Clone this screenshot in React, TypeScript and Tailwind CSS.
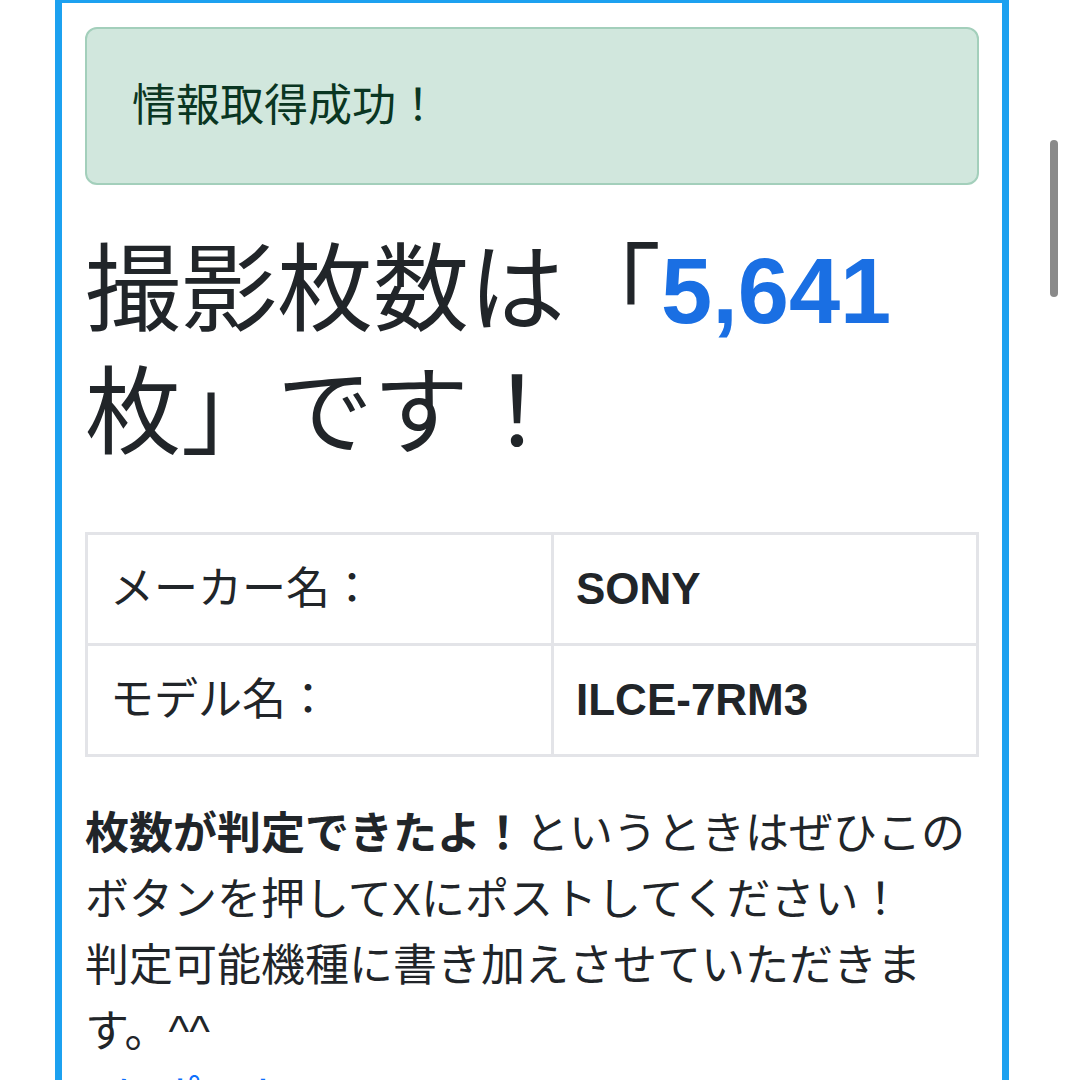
import React from 'react';

const jp = { fontFamily: '"Liberation Sans", "Noto Sans CJK JP", sans-serif' };

export default function App() {
  return (
    <div className="relative h-[1080px] overflow-hidden bg-white text-[#212529]" style={jp}>
      <div className="ml-[55px] w-[954px] border-x-[7px] border-t-[3px] border-[#1ca1f0] px-[23px] pt-[24px]">
        {/* success alert */}
        <div className="rounded-[12px] border-[2px] border-[#a3cfbb] bg-[#d1e7dd] px-[45px] py-[44px] text-[44px] leading-[66px] text-[#0a3622]">
          情報取得成功！
        </div>

        <h1 className="mt-[44px] text-[96px] font-normal leading-[122px]">
          撮影枚数は「<span className="text-[92px] font-bold text-[#1a6fe3]">5,641</span>枚」です！
        </h1>

        <table className="mt-[58px] w-full border-collapse text-[44px] leading-[66px]">
          <tbody>
            <tr>
              <td className="w-[466px] border-[3px] border-[#e3e4e8] px-[22px] py-[21px]">メーカー名：</td>
              <td className="border-[3px] border-[#e3e4e8] px-[22px] py-[21px] font-bold">SONY</td>
            </tr>
            <tr>
              <td className="w-[466px] border-[3px] border-[#e3e4e8] px-[22px] py-[21px]">モデル名：</td>
              <td className="border-[3px] border-[#e3e4e8] px-[22px] py-[21px] font-bold">ILCE-7RM3</td>
            </tr>
          </tbody>
        </table>

        <p className="mt-[44px] text-[44px] leading-[66px]">
          <b>枚数が判定できたよ！</b>というときはぜひこのボタンを押してXにポストしてください！
          <br />
          判定可能機種に書き加えさせていただきます。^^
        </p>
        <a href="#" className="block text-[44px] leading-[66px] text-[#0d6efd]">
          Xにポスト
        </a>
      </div>

      {/* overlay scrollbar */}
      <div className="absolute left-[1050px] top-[140px] h-[157px] w-[8px] rounded-full bg-[#8a8a8a]" />
    </div>
  );
}
